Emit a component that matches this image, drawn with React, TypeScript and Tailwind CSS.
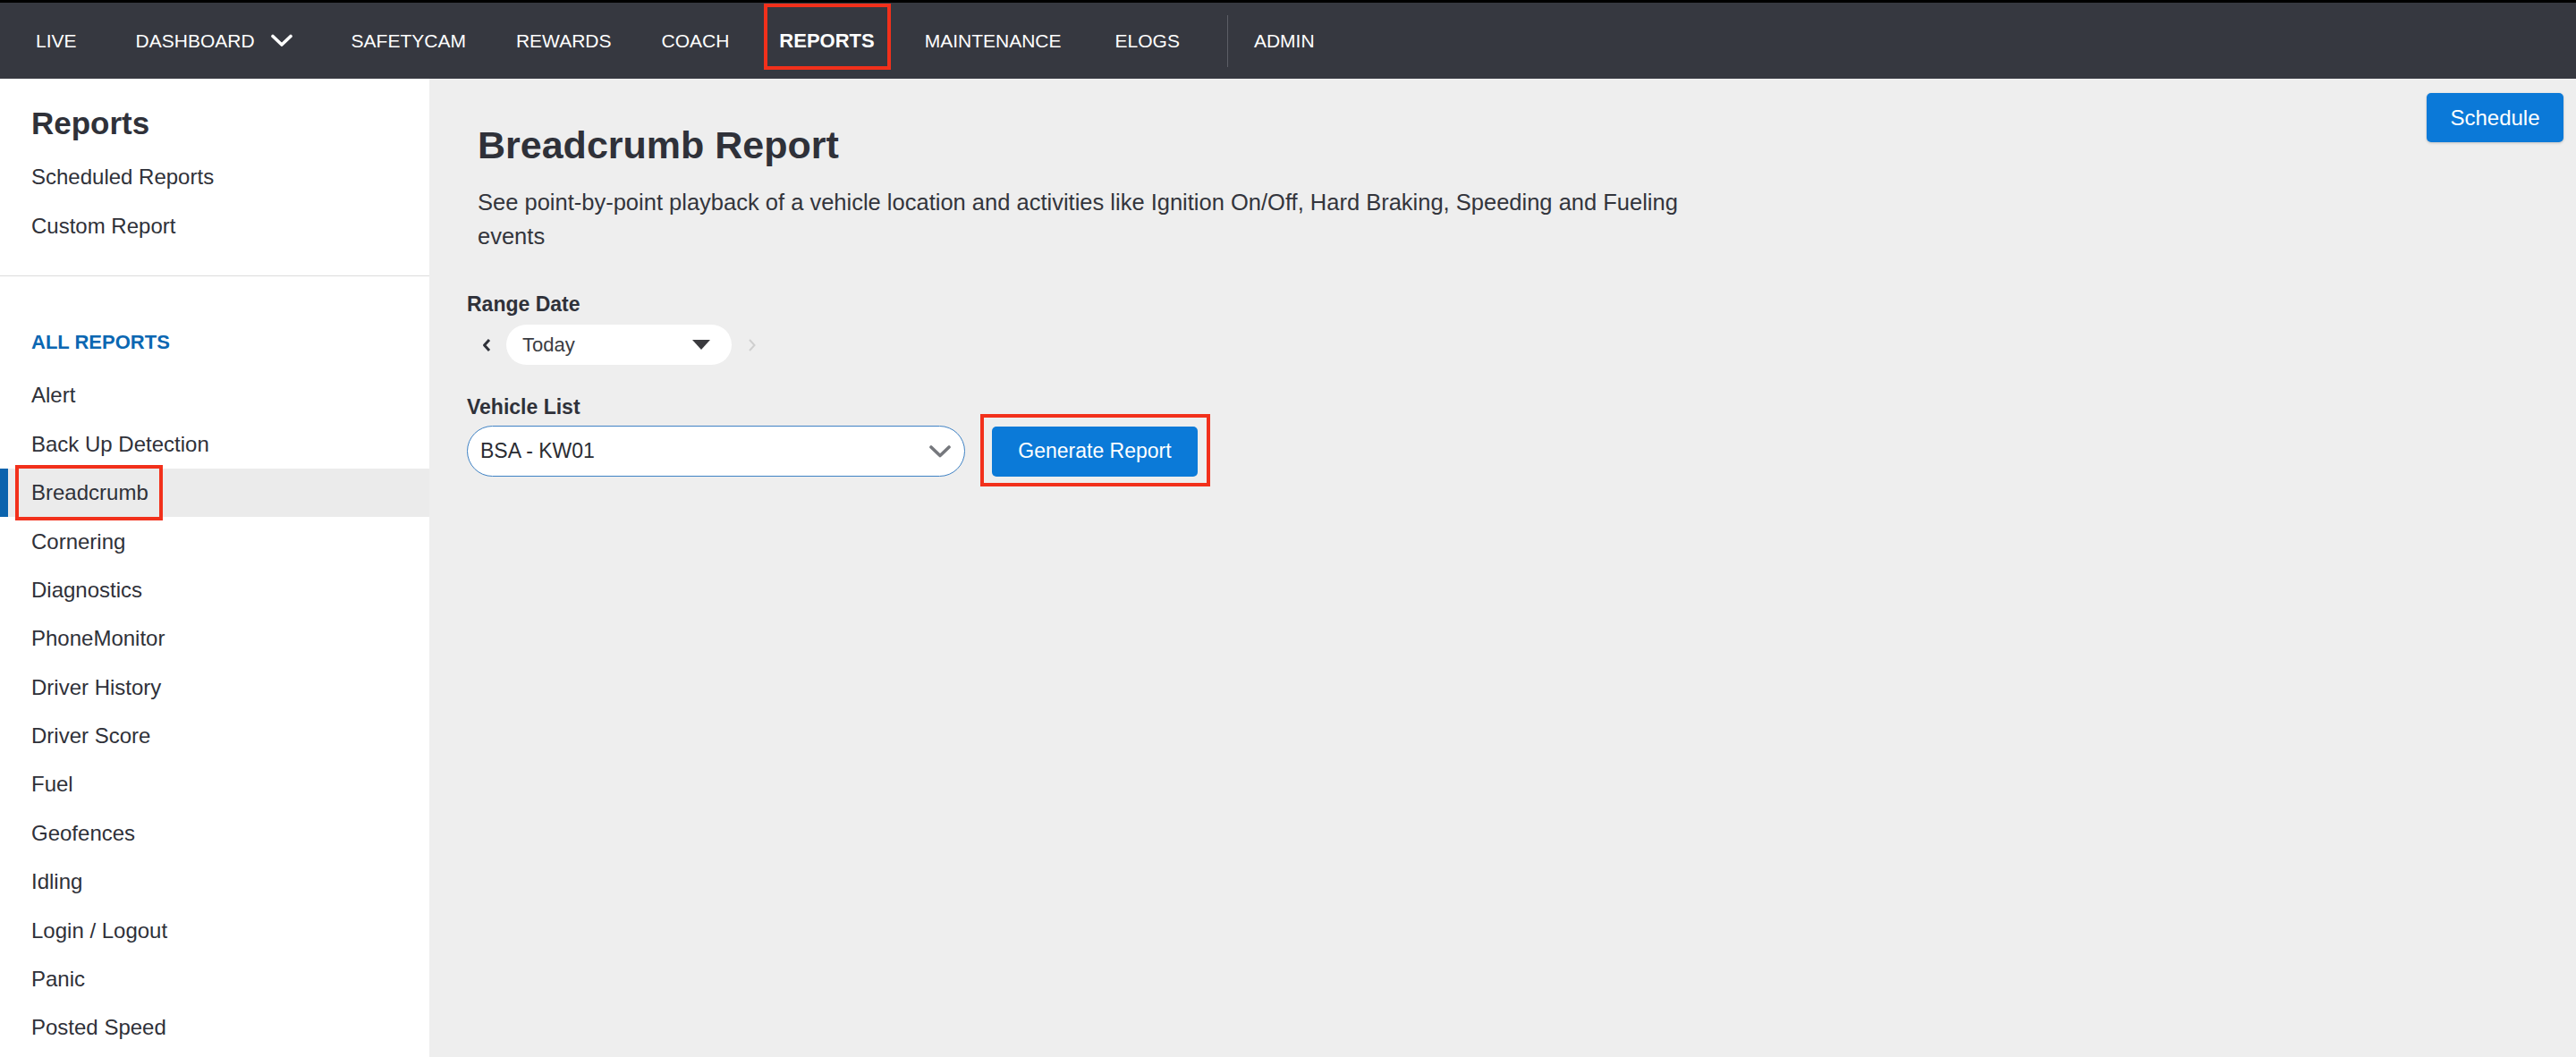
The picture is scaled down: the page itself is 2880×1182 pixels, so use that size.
import React from 'react';

const navItems = ['SAFETYCAM', 'REWARDS', 'COACH'];
const reportLinks = [
  'Alert',
  'Back Up Detection',
  'Breadcrumb',
  'Cornering',
  'Diagnostics',
  'PhoneMonitor',
  'Driver History',
  'Driver Score',
  'Fuel',
  'Geofences',
  'Idling',
  'Login / Logout',
  'Panic',
  'Posted Speed',
];

const font = { fontFamily: '"Liberation Sans", Arial, sans-serif' };

const TopNav = () => (
  <header className="h-[88px] shrink-0 border-t-[3px] border-black bg-[#363840] text-white">
    <nav className="flex h-full items-center gap-[56px] pl-[40px] text-[21px] leading-[24px]">
      <span>LIVE</span>
      <span className="flex items-center gap-[18px] px-[10px]">
        DASHBOARD
        <svg width="24" height="15" viewBox="0 0 24 15" fill="none">
          <polyline
            points="2,2.5 12,12 22,2.5"
            stroke="white"
            strokeWidth="3.6"
            strokeLinecap="round"
            strokeLinejoin="round"
          />
        </svg>
      </span>
      {navItems.map((item) => (
        <span key={item}>{item}</span>
      ))}
      <span className="relative text-[22px] font-bold">
        REPORTS
        <span className="absolute -top-[30px] -bottom-[20px] -left-[17px] -right-[18px] border-[4px] border-[#f2301b]" />
      </span>
      <span>MAINTENANCE</span>
      <span className="ml-[4px] flex items-center gap-[29px]">
        ELOGS
        <span className="ml-[24px] h-[58px] w-px bg-[#5c5e66]" />
        ADMIN
      </span>
    </nav>
  </header>
);

const Sidebar = () => (
  <aside className="w-[480px] shrink-0 overflow-hidden bg-white text-[#2f3139]">
    <h2 className="pl-[35px] pt-[30px] text-[35px] font-bold leading-[40px]">Reports</h2>
    <ul className="mt-[13px] text-[24px]">
      <li className="flex h-[54.4px] items-center pl-[35px]">Scheduled Reports</li>
      <li className="flex h-[54.4px] items-center pl-[35px]">Custom Report</li>
    </ul>
    <div className="mt-[28px] h-px bg-[#dcdcdc]" />
    <p className="mt-[47px] flex h-[54.4px] items-center pl-[35px] text-[22px] font-bold text-[#0b67b2]">
      ALL REPORTS
    </p>
    <ul className="mt-[5px] text-[24px]">
      {reportLinks.map((name) =>
        name === 'Breadcrumb' ? (
          <li
            key={name}
            className="flex h-[54.4px] items-center border-l-[9px] border-[#0b63ad] bg-[#ebebeb] pl-[26px]"
          >
            <span className="relative">
              {name}
              <span className="absolute -top-[13px] -bottom-[13px] -left-[18px] -right-[16px] border-[4px] border-[#f2301b]" />
            </span>
          </li>
        ) : (
          <li key={name} className="flex h-[54.4px] items-center pl-[35px]">
            {name}
          </li>
        ),
      )}
    </ul>
  </aside>
);

const ReportForm = () => (
  <section className="flex-1 pl-[42px] pt-[48px] text-[#2f3139]">
    <div className="pl-[12px]">
      <h1 className="text-[43px] font-bold leading-[52px]">Breadcrumb Report</h1>
      <p className="mt-[19px] max-w-[1390px] text-[25.5px] leading-[38px] text-[#33353c]">
        See point-by-point playback of a vehicle location and activities like Ignition On/Off, Hard Braking,
        Speeding and Fueling events
      </p>
    </div>

    <label className="mt-[43px] block text-[23px] font-bold leading-[28px]">Range Date</label>
    <div className="mt-[9px] flex items-center">
      <svg width="13" height="16" viewBox="0 0 13 16" className="ml-[16px]">
        <polyline points="9,2 3.5,8 9,14" fill="none" stroke="#2f3139" strokeWidth="3" strokeLinejoin="round" />
      </svg>
      <div className="ml-[15px] flex h-[45px] w-[252px] items-center justify-between rounded-full bg-white pl-[18px] pr-[24px]">
        <span className="text-[22px] text-[#3a3c42]">Today</span>
        <svg width="20" height="11" viewBox="0 0 20 11">
          <polygon points="0,0 20,0 10,11" fill="#3a3a3e" />
        </svg>
      </div>
      <svg width="12" height="16" viewBox="0 0 12 16" className="ml-[17px]">
        <polyline points="3,2 8.5,8 3,14" fill="none" stroke="#cfcfcf" strokeWidth="2" />
      </svg>
    </div>

    <label className="mt-[33px] block text-[23px] font-bold leading-[28px]">Vehicle List</label>
    <div className="mt-[7px] flex items-center">
      <div className="flex h-[57px] w-[557px] items-center justify-between rounded-full border border-[#3f82c4] bg-white pl-[14px] pr-[14px]">
        <span className="text-[23px] text-[#2a2c32]">BSA - KW01</span>
        <svg width="26" height="16" viewBox="0 0 26 16">
          <polyline
            points="3,3 13,12.5 23,3"
            fill="none"
            stroke="#76787d"
            strokeWidth="3.6"
            strokeLinecap="round"
            strokeLinejoin="round"
          />
        </svg>
      </div>
      <div className="relative ml-[30px]">
        <button className="h-[56px] w-[230px] rounded-[5px] bg-[#0b7ad8] text-[23px] text-white">
          Generate Report
        </button>
        <span className="absolute -top-[14px] -bottom-[11px] -left-[13px] -right-[14px] border-[4px] border-[#f2301b]" />
      </div>
    </div>
  </section>
);

export default function App() {
  return (
    <div className="flex h-[1182px] w-[2880px] flex-col overflow-hidden" style={font}>
      <TopNav />
      <div className="flex min-h-0 flex-1">
        <Sidebar />
        <main className="flex flex-1 bg-[#eeeeee]">
          <ReportForm />
          <div className="pr-[14px] pt-[16px]">
            <button className="h-[55px] w-[153px] rounded-[5px] bg-[#0b79d8] text-[24px] text-white shadow-[0_1px_3px_rgba(0,0,0,0.2)]">
              Schedule
            </button>
          </div>
        </main>
      </div>
    </div>
  );
}
